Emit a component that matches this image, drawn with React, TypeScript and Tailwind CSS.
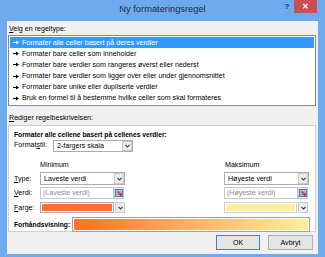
import React from "react";

const rows = [
  "Formater alle celler basert på deres verdier",
  "Formater bare celler som inneholder",
  "Formater bare verdier som rangeres øverst eller nederst",
  "Formater bare verdier som ligger over eller under gjennomsnittet",
  "Formater bare unike eller dupliserte verdier",
  "Bruk en formel til å bestemme hvilke celler som skal formateres",
];

function Arrow({ white }: { white?: boolean }) {
  const c = white ? "#ffffff" : "#000000";
  return (
    <svg width="6" height="5" viewBox="0 0 6 5" className="shrink-0">
      <rect x="0" y="2" width="4" height="1" fill={c} />
      <path d="M3 0.5 L6 2.5 L3 4.5 Z" fill={c} />
    </svg>
  );
}

function Chevron() {
  return (
    <svg width="5" height="4" viewBox="0 0 5 4">
      <path d="M0.5 0.8 L2.5 3 L4.5 0.8" stroke="#333" strokeWidth="1.1" fill="none" />
    </svg>
  );
}

function ArrowBox() {
  return (
    <div className="w-[10px] h-full shrink-0 border border-[#c8c8c8] bg-[#ececec] flex items-center justify-center">
      <Chevron />
    </div>
  );
}

function RangeIcon() {
  return (
    <div className="w-[10px] h-full shrink-0 border border-[#c8c8c8] bg-[#e6e6e6] flex items-center justify-center">
      <svg width="8" height="8" viewBox="0 0 8 8">
        <rect x="0.5" y="0.5" width="7" height="7" fill="#b8cde8" stroke="#5b7fb5" strokeWidth="1" />
        <line x1="0.5" y1="3" x2="7.5" y2="3" stroke="#5b7fb5" strokeWidth="0.6" />
        <line x1="0.5" y1="5.3" x2="7.5" y2="5.3" stroke="#5b7fb5" strokeWidth="0.6" />
        <line x1="3" y1="0.5" x2="3" y2="7.5" stroke="#5b7fb5" strokeWidth="0.6" />
        <path d="M3.2 2.2 L6.4 5.4 L5.6 6.2 L2.4 3 Z" fill="#e02020" />
        <rect x="4.6" y="4.4" width="2.4" height="2.4" fill="#e02020" />
      </svg>
    </div>
  );
}

function Select({ text, w }: { text: string; w: string }) {
  return (
    <div className={`${w} h-full border border-[#acacac] bg-white flex items-stretch`}>
      <div className="flex-1 pl-[3px] flex items-center text-black">{text}</div>
      <ArrowBox />
    </div>
  );
}

export default function App() {
  return (
    <div
      className="w-[325px] h-[257px] bg-[#6eaaee] flex flex-col overflow-hidden text-[7.1px] leading-[10px] text-black"
      style={{ fontFamily: '"Liberation Sans", Arial, sans-serif' }}
    >
      {/* Title bar */}
      <div className="h-[21px] flex shrink-0">
        <div className="flex-1 pl-[45px] text-center text-[9.3px] leading-[18px] text-[#1e2a3a]">
          Ny formateringsregel
        </div>
        <div className="w-[45px] flex items-start">
          <div className="w-[14px] text-center text-[8px] leading-[13px] font-bold text-[#2b3a55]">?</div>
          <div className="w-[23px] h-[13px] bg-[#c75050] flex items-center justify-center text-white text-[8px] font-bold leading-none">
            ✕
          </div>
        </div>
      </div>

      {/* Content */}
      <div className="mx-[7px] h-[233px] bg-[#f0f0f0] flex flex-col">
        <div className="pl-[2px] pt-[3px] h-[14px]">
          <span className="underline">V</span>elg en regeltype:
        </div>
        <div className="ml-[1px] w-[308px] h-[71px] border border-[#828790] bg-white py-[1px] px-[1px] flex flex-col">
          {rows.map((r, i) => (
            <div
              key={r}
              className={`h-[11.2px] flex items-center gap-[2px] pl-[3px] ${i === 0 ? "bg-[#3399ff] text-white" : ""}`}
            >
              <Arrow white={i === 0} />
              <span className="pl-[1px]">{r}</span>
            </div>
          ))}
        </div>
        <div className="pl-[2px] mt-[7px] h-[12px]">
          <span className="underline">R</span>ediger regelbeskrivelsen:
        </div>

        {/* Description box */}
        <div className="ml-[1px] w-[308px] h-[107px] border border-[#cfcfcf] bg-white flex flex-col pl-[5px]">
          <div className="pt-[4px] h-[14px] font-bold text-[6.7px]">
            Formater alle cellene basert på cellenes verdier:
          </div>
          <div className="flex items-start h-[12px]">
            <div className="w-[39px] pt-[0px]">
              Format<span className="underline">s</span>til:
            </div>
            <Select text="2-fargers skala" w="w-[80px]" />
          </div>
          <div className="grid grid-cols-[26px_85px_99px_85px] mt-[8px] h-[10px]">
            <div />
            <div>Minimum</div>
            <div />
            <div className="pl-[1px]">Maksimum</div>
          </div>
          <div className="grid grid-cols-[26px_85px_99px_85px] mt-[2px] h-[13px] items-center">
            <div>
              <span className="underline">T</span>ype:
            </div>
            <div className="h-[13px]">
              <Select text="Laveste verdi" w="w-[85px]" />
            </div>
            <div />
            <div className="h-[13px]">
              <Select text="Høyeste verdi" w="w-[85px]" />
            </div>
          </div>
          <div className="grid grid-cols-[26px_85px_99px_85px] mt-[2px] h-[12px] items-center">
            <div>
              <span className="underline">V</span>erdi:
            </div>
            <div className="h-[12px] flex">
              <div className="w-[74px] h-full border border-[#c8c8c8] bg-white pl-[2px] flex items-center text-[#8a8a8a]">
                (Laveste verdi)
              </div>
              <RangeIcon />
            </div>
            <div />
            <div className="h-[12px] flex">
              <div className="w-[74px] h-full border border-[#c8c8c8] bg-white pl-[2px] flex items-center text-[#8a8a8a]">
                (Høyeste verdi)
              </div>
              <RangeIcon />
            </div>
          </div>
          <div className="grid grid-cols-[26px_85px_99px_85px] mt-[3px] h-[11px] items-center">
            <div>
              <span className="underline">F</span>arge:
            </div>
            <div className="h-[11px] flex gap-[1px]">
              <div className="w-[74px] h-full border border-[#acacac] bg-white p-[1px]">
                <div className="w-full h-full bg-[#ff7128]" />
              </div>
              <ArrowBox />
            </div>
            <div />
            <div className="h-[11px] flex gap-[1px]">
              <div className="w-[73px] h-full border border-[#d0d0d0] bg-white p-[1px]">
                <div className="w-full h-full bg-[#ffef9c]" />
              </div>
              <ArrowBox />
            </div>
          </div>
          <div className="flex items-center mt-[4px] h-[15px]">
            <div className="w-[58px] font-bold text-[6.7px]">Forhåndsvisning:</div>
            <div className="w-[238px] h-[15px] border border-[#a0a0a0] bg-white p-[1px]">
              <div className="w-full h-full bg-[linear-gradient(to_right,#ff7128,#ffef9c)]" />
            </div>
          </div>
        </div>

        {/* Buttons */}
        <div className="flex justify-end gap-[8px] mr-[5px] mt-[3px]">
          <div className="w-[44px] h-[15px] border border-[#3c7fd7] bg-[#e5e5e5] flex items-center justify-center">
            OK
          </div>
          <div className="w-[45px] h-[15px] border border-[#adadad] bg-[#e5e5e5] flex items-center justify-center">
            Avbryt
          </div>
        </div>
      </div>
    </div>
  );
}
